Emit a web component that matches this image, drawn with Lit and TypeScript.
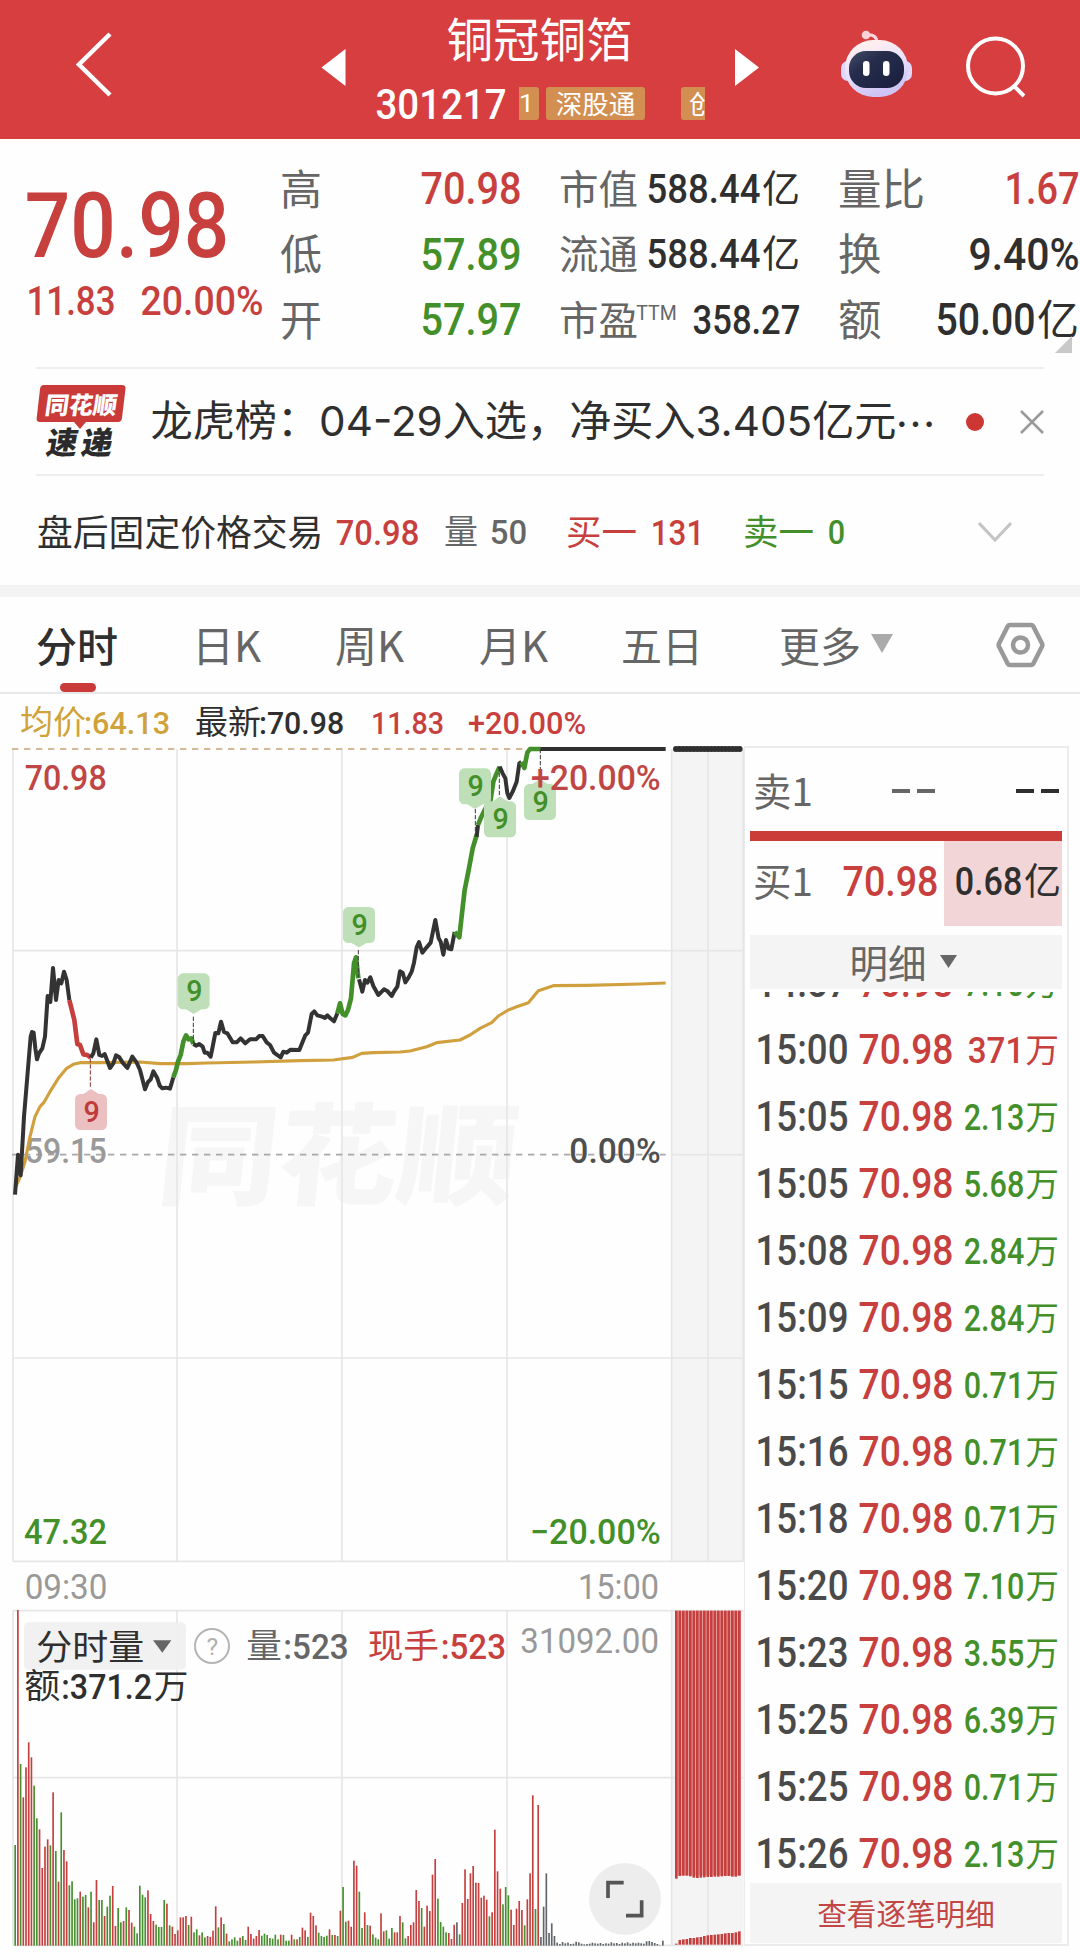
import { LitElement, html, svg, css } from "lit";
import { customElement } from "lit/decorators.js";

/* One run of text drawn to an exact width, so that columns of figures stay condensed and aligned. */
const fit = (text: string, width: number, size: number, cls = "") => html`<svg
  class="fit ${cls}" width=${width} height=${size} viewBox="0 0 ${width} ${size}"><text
  x=${-0.035 * size} y=${size * 0.855} font-size=${size}
  textLength=${width + 0.07 * size} lengthAdjust="spacingAndGlyphs">${text}</text></svg>`;

const base = css`
  :host, * { box-sizing: border-box; }
  .fit { display: block; flex: none; overflow: visible; font-family: Roboto, "Noto Sans CJK SC", sans-serif; font-weight: 500; fill: currentColor; }
  .regular { font-weight: 400; }
  .red { color: #c8403e; }
  .green { color: #43902a; }
  .ink { color: #2f2f2f; }
  .mid { color: #666; }
  .gold { color: #cfa23a; }
  .row { display: flex; align-items: center; }
`;

@customElement("stock-header")
class StockHeader extends LitElement {
  static styles = [base, css`
    :host { display: flex; height: 139px; background: #d73e40; color: #fff; }
    .icon { display: block; flex: none; }
    .back { margin: 29px 0 0 69px; }
    .prev { margin: 49px 0 0 207px; }
    .name { width: 330px; margin: 0 0 0 30px; display: flex; flex-direction: column; align-items: flex-start; }
    .title { align-self: center; height: 60px; margin-top: 7px; line-height: 60px; font-size: 46.5px; margin-left: -5px; white-space: nowrap; }
    .code { margin: 18px 0 0 0; gap: 14px; height: 36px; }
    .tags { display: flex; width: 186px; height: 33px; overflow: hidden; }
    .tag { flex: none; height: 33px; line-height: 31px; font-size: 26.5px; background: #d38f52; border-radius: 3px; white-space: nowrap; }
    .t1 { width: 20px; padding-left: 0; border-radius: 0 3px 3px 0; font-family: Roboto, sans-serif; }
    .t2 { width: 99px; margin-left: 7px; text-align: center; }
    .t3 { width: 60px; margin-left: 36px; padding-left: 8px; }
    .next { margin: 49px 0 0 28px; }
    .bot { margin: 28px 0 0 81px; }
    .search { margin: 32px 0 0 50px; }
  `];
  render() {
    return html`
      <svg class="icon back" width="44" height="70"><path d="M41 5L10 35.5L41 66" fill="none" stroke="#fff" stroke-width="4.5"/></svg>
      <svg class="icon prev" width="27" height="37"><path d="M25.500 0V37L1.500 18.500Z" fill="#fff"/></svg>
      <div class="name">
        <div class="title">铜冠铜箔</div>
        <div class="row code">${fit("301217", 128, 43)}
          <div class="tags"><span class="tag t1">1</span><span class="tag t2">深股通</span><span class="tag t3">创业板</span></div>
        </div>
      </div>
      <svg class="icon next" width="24" height="37"><path d="M0 0V37L24 18.500Z" fill="#fff"/></svg>
      <svg class="icon bot" width="76" height="72" viewBox="0 0 76 72">
        <defs>
          <linearGradient id="shell" x1="0" y1="0" x2=".35" y2="1"><stop offset=".2" stop-color="#fdeef0"/><stop offset=".55" stop-color="#e9e2fb"/><stop offset="1" stop-color="#cfc4f4"/></linearGradient>
          <linearGradient id="visor" x1="0" y1="0" x2="1" y2="1"><stop stop-color="#424c68"/><stop offset=".35" stop-color="#262d4c"/><stop offset="1" stop-color="#191d3d"/></linearGradient>
        </defs>
        <path d="M27 7Q37 6 37 15" fill="none" stroke="#f7d6dc" stroke-width="3.200"/>
        <circle cx="26" cy="7" r="4.300" fill="#fbd3d6"/>
        <rect x="1" y="33" width="71" height="20" rx="7" fill="#e0d8fa"/>
        <rect x="5" y="12" width="63" height="57" rx="28" fill="url(#shell)"/>
        <rect x="9" y="23" width="55" height="37" rx="17" fill="url(#visor)"/>
        <rect x="23" y="33" width="6.500" height="15" rx="3.200" fill="#fff"/><rect x="43" y="33" width="6.500" height="15" rx="3.200" fill="#fff"/>
      </svg>
      <svg class="icon search" width="64" height="68"><circle cx="29.500" cy="34" r="27.500" fill="none" stroke="#fff" stroke-width="4"/><path d="M48 54L58 64" stroke="#fff" stroke-width="4"/></svg>
    `;
  }
}

@customElement("stock-quote")
class StockQuote extends LitElement {
  static styles = [base, css`
    :host { display: grid; grid-template-columns: 252px 241px 240px 240px; column-gap: 0; height: 228px; padding: 17px 0 0 28px; position: relative; }
    .price { padding-top: 22.500px; }
    .change { gap: 28px; margin-top: 10px; }
    .col { display: flex; flex-direction: column; width: 240px; }
    .c2 { margin-left: 38px; }
    .c3 { margin-left: 77px; }
    .item { display: flex; align-items: center; justify-content: space-between; height: 65.500px; }
    .label { color: #666; font-size: 42px; line-height: 60px; white-space: nowrap; position: relative; top: -2px; }
    .small { font-size: 39.500px; }
    .c3 .label { font-size: 43.500px; }
    .val { display: flex; align-items: center; gap: 3px; }
    .unit { font-size: 38px; line-height: 50px; position: relative; top: -3px; margin-right: -1px; }
    .c3 .unit { font-size: 42px; margin-left: 0; }
    .ttm { position: relative; top: -7px; font-size: 21px; margin-left: -1px; }
    .cname { display: flex; align-items: center; }
    .corner { position: absolute; right: 8px; bottom: 14px; }
  `];
  render() {
    const item = (label: string, value: unknown, cls: string, small = false) => html`
      <div class="item"><span class="label ${small ? "small" : ""}">${label}</span><span class="val ${cls}">${value}</span></div>`;
    const yi = html`<span class="unit">亿</span>`;
    return html`
      <div class="price red">
        ${fit("70.98", 198, 91)}
        <div class="row change">${fit("11.83", 86, 41)}${fit("20.00%", 120, 41)}</div>
      </div>
      <div class="col">
        ${item("高", fit("70.98", 98, 45), "red")}
        ${item("低", fit("57.89", 98, 45), "green")}
        ${item("开", fit("57.97", 98, 45), "green")}
      </div>
      <div class="col c2">
        ${item("市值", html`${fit("588.44", 111, 40)}${yi}`, "ink", true)}
        ${item("流通", html`${fit("588.44", 111, 40)}${yi}`, "ink", true)}
        <div class="item"><span class="cname"><span class="label small">市盈</span><span class="mid ttm">${fit("TTM", 39, 21, "regular")}</span></span><span class="val ink">${fit("358.27", 105, 40)}</span></div>
      </div>
      <div class="col c3">
        ${item("量比", fit("1.67", 72, 45), "red")}
        ${item("换", fit("9.40%", 108, 45), "ink")}
        ${item("额", html`${fit("50.00", 97, 45)}${yi}`, "ink")}
      </div>
      <svg class="corner" width="17" height="17"><path d="M17 0V17H0Z" fill="#c9c9c9"/></svg>
    `;
  }
}

@customElement("stock-notices")
class StockNotices extends LitElement {
  static styles = [base, css`
    :host { display: block; }
    .news { height: 109px; margin: 0 36px; border-top: 2px solid #eee; border-bottom: 2px solid #eee; }
    .logo { flex: none; display: block; margin-top: 0; }
    .headline { margin: 1px 0 0 26px; font-family: Inter, "Noto Sans CJK SC", sans-serif; }
    .headline .fit { font-family: Inter, "Noto Sans CJK SC", sans-serif; font-weight: 400; }
    .more { flex: none; width: 41px; font-size: 41px; line-height: 60px; font-family: "Noto Sans CJK SC", sans-serif; }
    .dot { width: 18px; height: 18px; border-radius: 50%; background: #cd3733; margin-left: 30px; }
    .close { margin-left: 36px; }
    .fixed { height: 109px; padding: 3px 0 0 37px; font-size: 35.500px; }
    .fixed span { white-space: nowrap; line-height: 50px; position: relative; top: -2px; }
    .what { width: 300px; font-size: 35.800px; }
    .vol { width: 47px; margin-left: 26px; font-size: 34px; }
    .ask { width: 86px; }
    .s { margin-left: 40px; }
    .chev { margin-left: 134px; }
    .band { height: 12px; background: #f3f3f3; }
  `];
  render() {
    return html`
      <div class="row news">
        <svg class="logo" width="90" height="76" viewBox="0 0 90 76">
          <path d="M8 1H86Q90 1 89.500 5L86 34Q85.500 38 82 38H50L44 45L38 38H4Q0 38 .7 34L4 5Q4.500 1 8 1Z" fill="#c93a38"/>
          <text x="0" y="0" transform="translate(8 30) skewX(-8)" font-family="Noto Sans CJK SC" font-weight="900" font-size="24" fill="#fff" textLength="72" lengthAdjust="spacingAndGlyphs">同花顺</text>
          <text x="0" y="0" transform="translate(9 70) skewX(-10)" font-family="Noto Sans CJK SC" font-weight="900" font-size="31" fill="#2b2b2b" textLength="66" lengthAdjust="spacing">速递</text>
        </svg>
        <div class="row headline ink">${fit("龙虎榜：04-29入选，净买入3.405亿元", 743, 41.500)}<span class="more" lang="zh-CN">…</span></div>
        <span class="dot"></span>
        <svg class="close" width="24" height="24"><path d="M1 1L23 23M23 1L1 23" stroke="#999" stroke-width="2.500"/></svg>
      </div>
      <div class="row fixed">
        <span class="what ink">盘后固定价格交易</span>
        <div class="red">${fit("70.98", 81, 35)}</div>
        <span class="vol mid">量</span>
        <div class="mid">${fit("50", 35, 34)}</div>
        <span class="ask s red">买一</span>
        <div class="red">${fit("131", 51, 35)}</div>
        <span class="ask s green">卖一</span>
        <div class="green">${fit("0", 15, 34)}</div>
        <svg class="chev" width="34" height="22"><path d="M1 2L17 19L33 2" fill="none" stroke="#c4c4c4" stroke-width="3"/></svg>
      </div>
      <div class="band"></div>
    `;
  }
}

@customElement("stock-tabs")
class StockTabs extends LitElement {
  static styles = [base, css`
    :host { display: block; }
    .tabs { display: grid; grid-template-columns: 156px 143px 144px 142px 158px 215px auto; padding: 0 0 0 36px; height: 97px; border-bottom: 2px solid #e8e8e8; color: #666; }
    .tab { display: flex; align-items: center; font-size: 41px; white-space: nowrap; padding-bottom: 2px; }
    .k { font-size: 42px; }
    .active { position: relative; color: #2f2f2f; font-weight: 500; }
    .active::after { content: ""; position: absolute; left: 24px; bottom: 0; width: 36px; height: 9px; border-radius: 5px; background: #c93a38; }
    .tri { margin-left: 10px; }
    .gear { align-self: center; margin-left: 2px; }
    .info { height: 46px; padding: 10px 0 0 20px; font-size: 33px; }
    .info span { line-height: 40px; white-space: nowrap; position: relative; top: -2px; margin-right: -1px; }
    .s1 { margin-left: 26px; } .s2 { margin-left: 29px; } .s3 { margin-left: 26px; }
  `];
  render() {
    return html`
      <div class="tabs">
        <div class="tab active">分时</div>
        <div class="tab k">日K</div><div class="tab k">周K</div><div class="tab k">月K</div><div class="tab">五日</div>
        <div class="tab">更多<svg class="tri" width="22" height="19"><path d="M0 0H22L11 19Z" fill="#aaa"/></svg></div>
        <svg class="gear" width="49" height="46" viewBox="0 0 49 46"><path d="M14 3H35Q36.500 3 37.200 4.200L46 21.500Q46.700 23 46 24.500L37.200 41.800Q36.500 43 35 43H14Q12.500 43 11.800 41.800L3 24.500Q2.300 23 3 21.500L11.800 4.200Q12.500 3 14 3Z" fill="none" stroke="#999" stroke-width="4.500"/><circle cx="24.500" cy="23" r="7.500" fill="none" stroke="#999" stroke-width="4.500"/></svg>
      </div>
      <div class="row info">
        <div class="row gold"><span>均价</span>${fit(":64.13", 84, 31)}</div>
        <div class="row ink s1"><span>最新</span>${fit(":70.98", 83, 31)}</div>
        <div class="red s2">${fit("11.83", 71, 31)}</div>
        <div class="red s3">${fit("+20.00%", 116, 31)}</div>
      </div>
    `;
  }
}

/* The chart is plotted on a grid three units to the pixel. */
const segments: [string, string][] = [
  ["#333", "45,1364 54,1244 62,1306 72,1130 84,985 92,890 96,876 101,878 106,925 111,958 117,940 127,925 135,890 143,768 151,786 159,684 168,780 176,720 184,730 192,695 200,720 208,780"],
  ["#c53f3c", "208,780 216,812 223,840 232,912 240,915 250,943 262,945 272,953"],
  ["#333", "272,953 280,940 289,898 298,945 306,948 314,942 330,984 340,970 348,946 358,952 368,968 382,984 397,950 410,968 420,990 435,1048 444,1026 452,1018 460,994 472,1015 479,1037 487,1045 498,1043 510,1046 520,1012"],
  ["#43902a", "520,1012 528,990 534,965 542,945 550,905 558,886 566,898 574,895 580,912"],
  ["#333", "580,912 588,917 598,912 608,920 614,938 622,938 632,950 639,915 646,879 655,880 663,845 672,876 682,880 698,907 710,907 722,895 736,910 750,898 768,898 778,888 788,888 800,907 810,915 822,938 842,952 850,935 860,938 872,929 898,930 908,905 916,886 924,878 935,822 943,814 952,826 966,830 975,834 982,826 990,834 1002,844 1012,820"],
  ["#43902a", "1012,820 1020,790 1028,822 1036,826 1044,810 1053,775 1062,670 1068,652 1075,715"],
  ["#333", "1077,718 1087,755 1095,720 1102,728 1111,712 1120,738 1135,765 1152,748 1163,754 1175,768 1183,753 1192,740 1200,694 1208,698 1216,727 1226,712 1235,695 1242,668 1250,622 1257,606 1267,638 1280,622 1292,608 1306,540 1316,595 1322,605 1330,644 1338,600 1346,626 1354,628 1364,576"],
  ["#43902a", "1364,576 1378,592 1386,520 1394,450 1406,390 1418,325 1430,285"],
  ["#333", "1430,290 1434,255"],
  ["#43902a", "1434,255 1442,235 1453,212 1460,198 1468,205 1474,165 1480,125 1490,100 1499,80"],
  ["#333", "1499,80 1508,100 1516,115 1522,160 1528,174 1538,155 1550,125 1558,70 1564,66"],
  ["#43902a", "1564,66 1573,84 1582,38 1590,27 1622,27"],
];
const average = "45,1345 60,1312 75,1265 90,1190 105,1130 120,1100 132,1087 150,1055 175,1015 200,985 220,973 240,968 300,968 420,966 480,971 560,971 620,969 760,966 900,962 1000,960 1058,952 1085,940 1120,938 1200,936 1230,933 1280,920 1310,908 1380,900 1410,885 1440,865 1475,848 1495,828 1525,810 1550,800 1585,788 1615,752 1660,737 1760,736 1920,732 1997,729";

/* Per-minute volume: a colour letter and the top of the bar. */
const volume = "g1035 r330 g792 r892 r802 r727 r772 g857 g955 r988 r1104 r1040 r1018 g1036 r877 g1053 r1145 g937 r1050 r1084 g1156 g1144 g1198 g1195 r1175 g1190 g1185 r1222 g1175 r1267 r1140 g1200 g1200 r1248 g1220 g1187 r1158 r1278 g1224 g1267 r1263 g1222 r1230 r1268 g1280 g1300 g1157 g1184 g1192 r1171 r1242 r1263 g1274 g1281 g1281 g1200 r1211 g1276 r1280 r1302 r1291 r1252 r1252 r1248 g1275 r1250 g1297 g1288 r1306 g1297 g1312 r1308 r1311 r1292 r1219 g1282 r1252 g1272 r1301 g1324 g1318 g1312 g1322 r1313 g1308 g1320 r1280 r1302 r1316 r1308 r1290 g1307 g1301 g1305 g1314 g1316 g1304 g1318 r1304 g1305 g1322 g1322 r1304 g1318 r1318 g1311 r1283 r1291 g1311 r1238 r1248 r1276 g1298 g1308 g1311 g1307 r1288 g1305 r1305 g1308 r1232 g1161 g1265 r1262 r1280 r1082 r1097 g1175 g1284 r1237 g1275 r1277 g1303 g1313 g1318 r1240 r1294 g1291 g1316 g1284 r1297 r1297 r1248 g1267 g1315 r1308 r1275 r1267 r1170 r1203 g1224 r1280 r1217 r1233 r1124 r1077 g1196 g1266 g1280 g1297 r1299 r1317 r1274 k1267 g1303 r1209 r1108 r1197 r1120 r1098 r1148 r1149 r1193 r1187 r1199 g1249 r1237 r989 r1114 r1166 g1213 g1161 g1186 r1229 r1275 r1226 r1203 r1230 g1276 r1198 r1120 r886 g1227 r915 k1311 k1220 k1120 k1299 k1270 k1308 k1328 k1332 k1326 k1330 k1328 k1332 k1331 k1325 k1327 k1331 k1333 k1332 k1331 k1328 k1330 k1331 k1329 k1332 k1330 k1331 k1327 k1330 k1329 k1332 k1328 k1330 k1327 k1331 k1328 k1330 k1328 k1330 k1331 k1324 k1323 k1326 k1329 k1332 k1336 k1322".split(" ");
const volColor: Record<string, string> = { r: "#c4403f", g: "#47902f", k: "#60666a" };
const lateBottom = [1136, 1128, 1127, 1127, 1129, 1133, 1134, 1133, 1132, 1131, 1131, 1130, 1130, 1129, 1128, 1128, 1130, 1130, 1127];
const lateTop = [1331, 1320, 1318, 1317, 1314, 1314, 1312, 1311, 1308, 1306, 1305, 1304, 1303, 1302, 1300, 1299, 1299, 1297, 1294];

const line = (x1: number, y1: number, x2: number, y2: number) => svg`<line x1=${x1} y1=${y1} x2=${x2} y2=${y2} stroke="#e6e6e6" stroke-width="5"/>`;
const label = (t: string, x: number, y: number, w: number, fill: string, size = 104, weight = 500) =>
  svg`<text x=${x - 4} y=${y} font-size=${size} fill=${fill} font-weight=${weight} textLength=${w + 8} lengthAdjust="spacingAndGlyphs">${t}</text>`;
/* A "9" marker: a rounded tag with a small pointer above or below it. */
const marker = (x: number, y: number, up: boolean, stem: [number, number], stemX: number, red = false) => {
  const cx = x + 48;
  return svg`
    <line x1=${stemX} x2=${stemX} y1=${stem[0]} y2=${stem[1]} stroke=${red ? "#8a3030" : "#3a3a3a"} stroke-width="3" stroke-dasharray="13 5"/>
    <g fill=${red ? "#ecc0c1" : "#bfdfb8"}><rect x=${x} y=${y} width="96" height="108" rx="16"/>
    <path d=${up ? `M${cx - 24} ${y + 1}L${cx - 6} ${y - 11}Q${cx} ${y - 17} ${cx + 6} ${y - 11}L${cx + 24} ${y + 1}Z` : `M${cx - 24} ${y + 107}L${cx - 6} ${y + 118}Q${cx} ${y + 124} ${cx + 6} ${y + 118}L${cx + 24} ${y + 107}Z`}/></g>
    <text x=${cx + 2} y=${y + 84} text-anchor="middle" font-size="86" font-weight="500" fill=${red ? "#bf3b39" : "#43902a"}>9</text>`;
};

@customElement("stock-chart")
class StockChart extends LitElement {
  static styles = [base, css`
    :host { display: block; flex: none; width: 744px; height: 1220px; }
    .plot { display: block; overflow: visible; font-family: Roboto, "Noto Sans CJK SC", sans-serif; }
  `];
  render() {
    const xs = [39, 531, 1026, 1521, 2015];
    return html`<svg class="plot" width="744" height="1220" viewBox="0 0 2232 3660">
      <rect x="2015" y="27" width="216" height="2437" fill="#f4f4f4"/>
      <rect x="2015" y="2612" width="216" height="1004" fill="#f4f4f4"/>
      <text transform="translate(465 1368) skewX(-6)" font-size="330" font-weight="900" font-family="Noto Sans CJK SC" fill="#f6f6f6" textLength="1075" lengthAdjust="spacingAndGlyphs">同花顺</text>
      ${xs.map((x) => svg`${line(x, 27, x, 2464)}${line(x, 2612, x, 3616)}`)}
      ${line(2124, 27, 2124, 2464)}${line(2124, 2612, 2124, 3616)}${line(2230, 27, 2230, 2464)}
      ${[632, 1854, 2464, 2612, 3113, 3616].map((y) => line(39, y, 2230, y))}
      ${line(2015, 1244, 2230, 1244)}
      <line x1="36" x2="1600" y1="27" y2="27" stroke="#c4a574" stroke-width="5" stroke-dasharray="19 17"/>
      <line x1="36" x2="1997" y1="1244" y2="1244" stroke="#a8a8a8" stroke-width="5" stroke-dasharray="19 17"/>
      ${label("59.15", 78, 1270, 238, "#999")}
      ${label("0.00%", 1712, 1270, 266, "#4f4f4f")}
      <polyline points=${average} fill="none" stroke="#d0a03e" stroke-width="9.500" stroke-linejoin="round"/>
      ${segments.map(([c, p]) => svg`<polyline points=${p} fill="none" stroke=${c} stroke-width=${c === "#333" ? 12 : 14} stroke-linejoin="round" stroke-linecap="butt"/>`)}
      <line x1="1621" x2="1997" y1="27" y2="27" stroke="#2f2f2f" stroke-width="12"/>
      <line x1="2028" x2="2222" y1="27" y2="27" stroke="#2f2f2f" stroke-width="18" stroke-linecap="round" stroke-dasharray=".1 10.500"/>
      <line x1="2028" x2="2222" y1="27" y2="27" stroke="#2f2f2f" stroke-width="13"/>
      ${marker(533, 700, false, [830, 910], 580)}
      ${marker(1029, 501, false, [630, 712], 1075)}
      ${marker(225, 1062, true, [955, 1045], 271, true)}
      ${marker(1377, 85, false, [207, 290], 1426)}
      ${marker(1452, 184, true, [80, 170], 1498)}
      ${marker(1572, 132, true, [27, 120], 1621)}
      ${label("70.98", 78, 150, 238, "#bf4644")}
      ${label("+20.00%", 1597, 150, 381, "#bf4644")}
      ${label("47.32", 76, 2412, 241, "#43902a")}
      ${label("−20.00%", 1594, 2412, 384, "#43902a")}
      ${label("09:30", 78, 2577, 240, "#999", 104, 400)}
      ${label("15:00", 1738, 2577, 235, "#999", 104, 400)}

      ${volume.map((v, i) => svg`<rect x=${43 + i * 8.13} y=${2280 + +v.slice(1)} width="5" height=${1337 - +v.slice(1)} fill=${volColor[v[0]]}/>`)}
      <rect x="2025" y="2612" width="198" height="794" fill="#f0aeae"/>
      ${lateBottom.map((b, i) => svg`<rect x=${2025 + i * 10.5} y="2612" width="8" height=${b + 2280 - 2612} fill="#c4403f"/><rect x=${2025 + i * 10.5} y=${lateTop[i] + 2280} width="8" height=${1334 - lateTop[i]} fill="#c4403f"/>`)}
      <rect x="72" y="2647" width="486" height="142" rx="14" fill="#f0f0f0" fill-opacity=".95"/>
      ${label("分时量", 113, 2760, 316, "#2f2f2f", 105, 400)}
      <path d="M459 2701H514L487 2738Z" fill="#666"/>
      <circle cx="636" cy="2718" r="51" fill="none" stroke="#b5b5b5" stroke-width="6"/>
      <text x="637" y="2744" font-size="74" text-anchor="middle" fill="#b0b0b0">?</text>
      ${label("量", 743, 2755, 99, "#666", 103, 400)}
      ${label(":523", 854, 2757, 188, "#666")}
      ${label("现手", 1107, 2755, 206, "#c8403e", 103, 400)}
      ${label(":523", 1326, 2757, 188, "#c8403e")}
      ${label("31092.00", 1565, 2740, 408, "#999", 104, 400)}
      ${label("额", 77, 2875, 100, "#2f2f2f", 103, 400)}
      ${label(":371.2", 188, 2877, 264, "#2f2f2f")}
      ${label("万", 465, 2875, 96, "#2f2f2f", 100, 400)}
      <circle cx="1875" cy="3477" r="108" fill="#ededed"/>
      <path d="M1824 3474V3428H1871M1878 3527H1925V3481" fill="none" stroke="#555" stroke-width="11"/>
    </svg>`;
  }
}

const trades: [string, string, boolean][] = [
  ["14:57", "7.10", false], ["15:00", "371", true], ["15:05", "2.13", false], ["15:05", "5.68", false], ["15:08", "2.84", false],
  ["15:09", "2.84", false], ["15:15", "0.71", false], ["15:16", "0.71", false], ["15:18", "0.71", false], ["15:20", "7.10", false],
  ["15:23", "3.55", false], ["15:25", "6.39", false], ["15:25", "0.71", false], ["15:26", "2.13", false],
];

@customElement("order-panel")
class OrderPanel extends LitElement {
  static styles = [base, css`
    :host { display: flex; flex-direction: column; width: 325px; height: 1200px; margin-top: 6px; padding: 0 5px 0 5px; border: 2px solid #ebebeb; border-left-width: 1px; }
    .side { color: #666; font-size: 38.500px; white-space: nowrap; position: relative; top: -2px; }
    .ask { flex: none; height: 83px; padding: 3px 3px 0 3px; }
    .dashes { display: flex; gap: 7px; }
    .dashes i { width: 18px; height: 3.500px; background: currentColor; }
    .d1 { margin-left: auto; margin-right: 81px; }
    .bar { flex: none; height: 10px; background: #cb3b37; }
    .bid { flex: none; height: 85px; padding-left: 3px; align-items: stretch; }
    .bid .side, .bid .p { align-self: center; margin-top: -6px; }
    .bid .p { margin-left: 31px; }
    .amt { display: flex; align-items: center; justify-content: flex-end; margin-left: auto; width: 118px; gap: 3px; background: #f2d5d6; padding: 0 1px 6px 0; font-size: 37px; }
    .amt span, .u { position: relative; top: -2px; }
    .detail { flex: none; height: 54px; margin-top: 9px; padding-bottom: 2px; background: #f4f4f4; color: #666; font-size: 38.500px; justify-content: center; gap: 13px; padding-right: 6px; }
    .list { flex: none; height: 891px; overflow: hidden; margin-top: 3px; }
    .trade { height: 67.030px; padding: 0 4px 0 7px; }
    .list .trade:first-child { margin-top: -43.500px; }
    .time { color: #4a4a4a; }
    .price { margin-left: 13px; }
    .value { display: flex; align-items: center; margin-left: auto; gap: 3px; padding-top: 2px; }
    .u { font-size: 33.500px; line-height: 50px; margin-right: -1px; }
    .more { margin-top: auto; flex: none; height: 60px; margin-bottom: 1px; line-height: 59px; text-align: center; background: #f4f4f4; color: #c14644; font-size: 29.600px; }
  `];
  render() {
    return html`
      <div class="row ask"><span class="side">卖1</span><div class="dashes mid d1"><i></i><i></i></div><div class="dashes ink"><i></i><i></i></div></div>
      <div class="bar"></div>
      <div class="row bid"><span class="side">买1</span><div class="p red">${fit("70.98", 93, 42)}</div>
        <div class="amt ink">${fit("0.68", 65, 38)}<span>亿</span></div></div>
      <div class="row detail">明细<svg width="17" height="13"><path d="M0 0H17L8.500 13Z" fill="#666"/></svg></div>
      <div class="list">
        ${trades.map(([t, v, up]) => html`<div class="row trade">
          <div class="time">${fit(t, 90, 42)}</div>
          <div class="price red">${fit("70.98", 92, 42)}</div>
          <div class="value ${up ? "red" : "green"}">${fit(v, up ? 54 : 58, 36)}<span class="u">万</span></div>
        </div>`)}
      </div>
      <div class="more">查看逐笔明细</div>
    `;
  }
}

@customElement("app-root")
class AppRoot extends LitElement {
  static styles = css`
    :host { display: block; width: 1080px; height: 1960px; overflow: hidden; background: #fefefe; font-family: "Noto Sans CJK SC", sans-serif; }
    .body { display: flex; align-items: flex-start; }
  `;
  render() {
    return html`
      <stock-header></stock-header>
      <stock-quote></stock-quote>
      <stock-notices></stock-notices>
      <stock-tabs></stock-tabs>
      <div class="body"><stock-chart></stock-chart><order-panel></order-panel></div>
    `;
  }
}
